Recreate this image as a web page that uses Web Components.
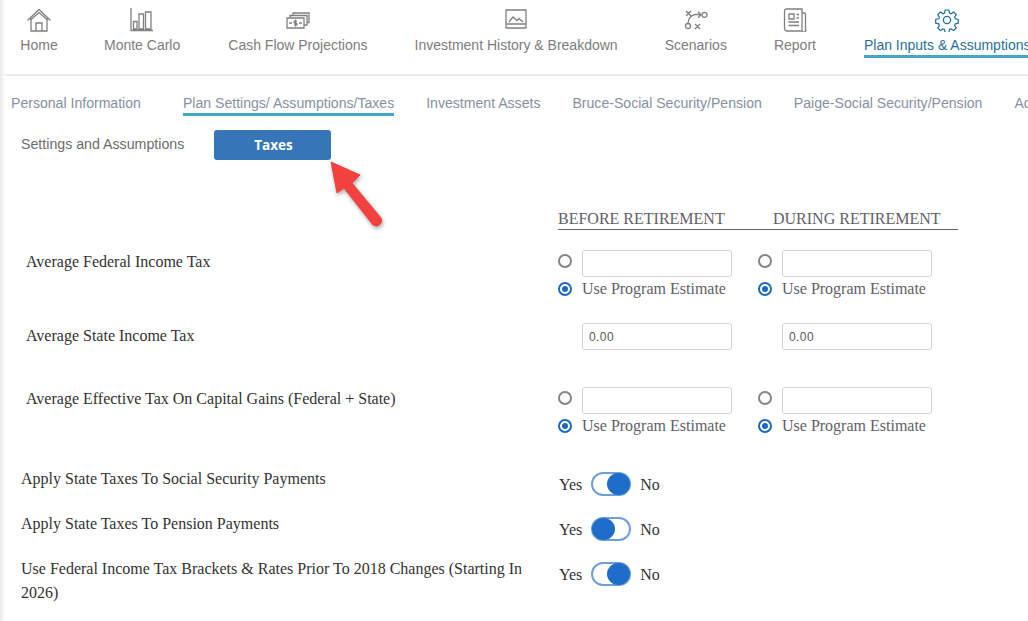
<!DOCTYPE html>
<html>
<head>
<meta charset="utf-8">
<style>
  html, body { margin: 0; padding: 0; background: #fff; }
  body { width: 1028px; height: 621px; overflow: hidden; position: relative; font-family: "Liberation Sans", Arial, sans-serif; }
</style>
</head>
<body>
<plan-page></plan-page>
<script>
const icons = {
  home: '<path d="M.5 12.500 12 1.500l11.500 11M3 11l1 0M20 11h1M4 10.500V23h16V10.500M9 23v-8h6v8"/><path d="M12 4.500 4 11.500M12 4.500l8 7"/>',
  chart: '<path d="M1 0v22.500h22M3.500 13.500H7V21H3.500zM9 6h4.500v15H9zM15.500 4H21v17h-5.500z"/>',
  cash: '<path d="M1 10h17v10H1zM4 10V7.500h17V17h-3M7 7.500V5h16v9.500h-2M3 15h3M13 15h3"/><path d="M9.500 11.500v7"/><path d="M11 13.200H9a1 1 0 0 0 0 2h1.200a1 1 0 0 1 0 2H8"/>',
  image: '<path d="M2 2h20v18H2zM2 16h20M5 14l4-5 4 3.500 2-2 4 3.500"/>',
  route: '<path d="M2 3l5 5M7 3l-5 5M11 16l5 5M16 16l-5 5M4 15c0-5 4-8 7-8.500h6M14 3.800l3 3-3 3"/><circle cx="20.500" cy="6.800" r="2.500"/><circle cx="4" cy="18" r="2.500"/>',
  news: '<path d="M1.500 3a2 2 0 0 1 2-2h15.500v22H4a2.500 2.500 0 0 1-2.500-2.500zM19 5h2.500a1 1 0 0 1 1 1v15a2 2 0 0 1-3.500 2M6 6h5v5H6zM13.500 6.500H16M13.500 10H16M5.500 14H16M5.500 17.500H16"/>',
  gear: '<circle cx="12" cy="12" r="3.600"/><path d="M10 1.200h4l.7 3.300 1.700.7 2.800-1.800 2.800 2.800-1.800 2.800.7 1.700 3.300.7v4l-3.300.7-.7 1.700 1.800 2.800-2.800 2.800-2.800-1.800-1.700.7-.7 3.300h-4l-.7-3.300-1.700-.7-2.800 1.800-2.800-2.800 1.800-2.800-.7-1.700-3.300-.7v-4l3.300-.7.7-1.700-1.800-2.800 2.800-2.800 2.800 1.800 1.700-.7z" transform="translate(.9 .9) scale(.925)"/>'
};

class NavItem extends HTMLElement {
  connectedCallback() {
    const active = this.hasAttribute('active');
    this.attachShadow({ mode: 'open' }).innerHTML = `
      <style>
        :host { display: flex; flex-direction: column; align-items: center; flex: none; height: 59px; font-size: 14px; color: ${active ? '#2a6f97' : '#7d7d7d'}; }
        svg { width: 24px; height: 24px; fill: none; stroke: ${active ? '#1f6f98' : '#808080'}; stroke-width: 1.300; margin-top: 8px; }
        span { margin-top: 5px; line-height: 16px; height: 18px; white-space: nowrap; }
        i { align-self: stretch; height: 3px; background: ${active ? '#45a5c9' : 'transparent'}; }
      </style>
      <svg viewBox="0 0 24 24">${icons[this.getAttribute('icon')]}</svg>
      <span><slot></slot></span><i></i>`;
  }
}
customElements.define('nav-item', NavItem);

class SubTab extends HTMLElement {
  connectedCallback() {
    const active = this.hasAttribute('active');
    this.attachShadow({ mode: 'open' }).innerHTML = `
      <style>
        :host { display: block; flex: none; font-size: 14.080px; line-height: 16px; color: #8791a3; white-space: nowrap; height: 23px; box-sizing: border-box; border-bottom: 3px solid ${active ? '#45a5c9' : 'transparent'}; padding-top: 2px; }
      </style><slot></slot>`;
  }
}
customElements.define('sub-tab', SubTab);

class RadioDot extends HTMLElement {
  connectedCallback() {
    const on = this.hasAttribute('checked');
    this.attachShadow({ mode: 'open' }).innerHTML = `
      <style>
        :host { display: block; flex: none; width: 14px; height: 14px; box-sizing: border-box; border-radius: 50%; border: 2px solid ${on ? '#1c68c6' : '#858585'}; background: #fff; position: relative; }
        b { display: ${on ? 'block' : 'none'}; position: absolute; left: 2px; top: 2px; width: 6px; height: 6px; border-radius: 50%; background: #1c68c6; }
      </style><b></b>`;
  }
}
customElements.define('radio-dot', RadioDot);

class TaxBox extends HTMLElement {
  connectedCallback() {
    this.attachShadow({ mode: 'open' }).innerHTML = `
      <style>
        :host { display: block; flex: none; width: 150px; height: 27px; box-sizing: border-box; border: 1px solid #d4d4d4; border-radius: 3px; background: #fff; padding: 6px 0 0 6px; font: 12px/15px "Liberation Sans", Arial, sans-serif; letter-spacing: .4px; color: #5b5b5b; }
      </style><slot></slot>`;
  }
}
customElements.define('tax-box', TaxBox);

// one column of a tax row: empty box + "use program estimate"
class EstimateCell extends HTMLElement {
  connectedCallback() {
    this.attachShadow({ mode: 'open' }).innerHTML = `
      <style>
        :host { display: block; width: 200px; flex: none; }
        .line { display: flex; align-items: flex-start; gap: 10px; margin-left: -1px; }
        .line > radio-dot { margin-top: 4px; }
        .two { height: 23px; margin-bottom: 1px; align-items: center; font-size: 16px; color: #5f6168; white-space: nowrap; }
        .two > radio-dot { margin-top: 0; }
      </style>
      <div class="line"><radio-dot></radio-dot><tax-box></tax-box></div>
      <div class="line two"><radio-dot checked></radio-dot><span>Use Program Estimate</span></div>`;
  }
}
customElements.define('estimate-cell', EstimateCell);

class TaxRow extends HTMLElement {
  connectedCallback() {
    this.attachShadow({ mode: 'open' }).innerHTML = `
      <style>
        :host { display: flex; padding-left: 26px; font-size: 16px; color: #333; }
        .label { width: 533px; flex: none; padding-top: 3px; line-height: 18px; }
        .cols { display: flex; }
      </style>
      <div class="label"><slot name="label"></slot></div>
      <div class="cols"><slot></slot></div>`;
  }
}
customElements.define('tax-row', TaxRow);

class YesNoRow extends HTMLElement {
  connectedCallback() {
    const left = this.getAttribute('pos') === 'yes';
    this.attachShadow({ mode: 'open' }).innerHTML = `
      <style>
        :host { display: flex; padding-left: 21px; font-size: 16px; color: #333; line-height: 24px; }
        .label { width: 510px; flex: none; margin-right: 28px; }
        .sw { display: flex; align-items: center; height: 24px; margin-top: 5px; }
        .sw span { margin-top: 2px; }
        .track { width: 40px; height: 24px; box-sizing: border-box; border: 2px solid #6f9fd8; border-radius: 12px; background: #fff; margin: 0 9px; display: flex; justify-content: ${left ? 'flex-start' : 'flex-end'}; align-items: center; }
        .knob { width: 23px; height: 22px; border-radius: 50%; background: #1f6dcb; flex: none; margin: 0 ${left ? '0 0 -1px' : '-1px 0 0'}; }
      </style>
      <div class="label"><slot></slot></div>
      <div class="sw"><span>Yes</span><div class="track"><div class="knob"></div></div><span>No</span></div>`;
  }
}
customElements.define('yes-no-row', YesNoRow);

class PlanPage extends HTMLElement {
  connectedCallback() {
    this.attachShadow({ mode: 'open' }).innerHTML = `
      <style>
        :host { display: block; width: 1028px; height: 621px; position: relative; overflow: hidden; font-family: "Liberation Sans", Arial, sans-serif; }
        .edge { position: absolute; left: 0; top: 0; bottom: 0; width: 5px; background: linear-gradient(90deg, #e9e9e9, #f6f6f6 70%, #fff); }
        .nav { display: flex; gap: 47px; padding-left: 21px; height: 59px; width: 1100px; }
        .nav nav-item:first-child { width: 36px; }
        .nav nav-item:nth-child(2) { margin-right: 1px; }
        .nav nav-item:nth-child(6) { margin-right: 1px; }
        hr { margin: 15px 0 0 5px; height: 2px; background: #ececec; border: 0; }
        .tabs { display: flex; gap: 32px; padding: 17px 0 0 11px; width: 1200px; }
        .tabs sub-tab:first-child { margin-right: 10px; }
        .sub { display: flex; align-items: center; padding: 14px 0 0 21px; font-size: 14.200px; color: #6d6d6d; }
        .sub span { width: 193px; flex: none; margin-top: -2px; }
        .taxes { width: 117px; height: 30px; box-sizing: border-box; padding-left: 2px; border-radius: 3px; background: #3676b8; color: #fff; font-weight: bold; display: flex; align-items: center; justify-content: center; font-family: "Open Sans", "Liberation Sans", sans-serif; font-size: 13.500px; }
        .head { display: flex; width: 400px; box-sizing: border-box; margin: 50px 0 0 558px; height: 20px; border-bottom: 1px solid #666; font: 16px/17px "Liberation Serif", serif; color: #5f6168; white-space: nowrap; }
        .head span:first-child { width: 215px; }
        .rows { font-family: "Liberation Serif", serif; }
        tax-row.a { margin-top: 20px; }
        tax-row.b { margin-top: 22px; }
        tax-row.c { margin-top: 37px; }
        yes-no-row.d { margin-top: 29px; }
        yes-no-row.e { margin-top: 16px; }
        yes-no-row.f { margin-top: 16px; }
        .arrow { position: absolute; left: 325px; top: 155px; filter: drop-shadow(1px 2px 2px rgba(0,0,0,.35)); }
      </style>
      <div class="edge"></div>
      <nav class="nav">
        <nav-item icon="home">Home</nav-item>
        <nav-item icon="chart">Monte Carlo</nav-item>
        <nav-item icon="cash">Cash Flow Projections</nav-item>
        <nav-item icon="image">Investment History &amp; Breakdown</nav-item>
        <nav-item icon="route">Scenarios</nav-item>
        <nav-item icon="news">Report</nav-item>
        <nav-item icon="gear" active>Plan Inputs &amp; Assumptions</nav-item>
      </nav>
      <hr>
      <div class="tabs">
        <sub-tab>Personal Information</sub-tab>
        <sub-tab active>Plan Settings/ Assumptions/Taxes</sub-tab>
        <sub-tab>Investment Assets</sub-tab>
        <sub-tab>Bruce-Social Security/Pension</sub-tab>
        <sub-tab>Paige-Social Security/Pension</sub-tab>
        <sub-tab>Additional</sub-tab>
      </div>
      <div class="sub"><span>Settings and Assumptions</span><div class="taxes">Taxes</div></div>
      <div class="head"><span>BEFORE RETIREMENT</span><span>DURING RETIREMENT</span></div>
      <div class="rows">
        <tax-row class="a"><span slot="label">Average Federal Income Tax</span><estimate-cell></estimate-cell><estimate-cell></estimate-cell></tax-row>
        <tax-row class="b"><span slot="label" style="display:block;margin-top:1px">Average State Income Tax</span><div style="display:flex;gap:50px;margin-left:23px"><tax-box>0.00</tax-box><tax-box>0.00</tax-box></div></tax-row>
        <tax-row class="c"><span slot="label">Average Effective Tax On Capital Gains (Federal + State)</span><estimate-cell></estimate-cell><estimate-cell></estimate-cell></tax-row>
        <yes-no-row class="d" pos="no">Apply State Taxes To Social Security Payments</yes-no-row>
        <yes-no-row class="e" pos="yes">Apply State Taxes To Pension Payments</yes-no-row>
        <yes-no-row class="f" pos="no">Use Federal Income Tax Brackets &amp; Rates Prior To 2018 Changes (Starting In 2026)</yes-no-row>
      </div>
      <svg class="arrow" width="66" height="80" viewBox="0 0 66 80">
        <path d="M6 7 L35 20 L27 28 L56 63 a5.500 5.500 0 0 1 -8 7 L19 33 L12 38 Z" fill="#f2413f" stroke="#f2413f" stroke-linejoin="round"/>
      </svg>`;
  }
}
customElements.define('plan-page', PlanPage);
</script>
</body>
</html>
